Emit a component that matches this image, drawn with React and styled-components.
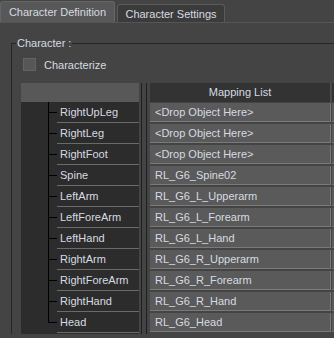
import React from "react";
import styled, { createGlobalStyle } from "styled-components";

const Global = createGlobalStyle`
  html, body { margin: 0; padding: 0; background: #444444; overflow: hidden; }
  body {
    font-family: "Liberation Sans", Arial, sans-serif;
    font-size: 11px;
    color: #d6dbe2;
  }
  #root { width: 334px; height: 338px; overflow: hidden; }
`;

const Page = styled.div`
  width: 334px;
  height: 338px;
  overflow: hidden;
  background: #444444;
`;

const TabBar = styled.div`
  display: flex;
  align-items: flex-end;
  height: 22px;
  border-bottom: 1px solid #555555;
`;

const Tab = styled.div`
  box-sizing: border-box;
  display: flex;
  align-items: center;
  justify-content: center;
  width: ${(p) => (p.$active ? 115 : 108)}px;
  height: ${(p) => (p.$active ? 21 : 18)}px;
  margin-left: ${(p) => (p.$active ? 0 : 2)}px;
  background: ${(p) => (p.$active ? "#585858" : "#3b3b3b")};
  border: 1px solid ${(p) => (p.$active ? "#666666" : "#5a5a5a")};
  border-bottom: none;
  border-radius: 3px 3px 0 0;
  white-space: nowrap;
`;

const Panel = styled.div`
  padding-left: 11px;
`;

const Group = styled.fieldset`
  margin: 14px 0 0 0;
  padding: 0;
  width: 460px;
  min-width: 0;
  border: 1px solid #262626;
  border-right: none;
  border-bottom: none;
`;

const Legend = styled.legend`
  margin-left: 4px;
  padding: 0 1px;
  line-height: 12px;
`;

const GroupBody = styled.div`
  padding-left: 9px;
`;

const CheckRow = styled.label`
  display: flex;
  align-items: center;
  gap: 8px;
  height: 13px;
  margin: 9px 0 0 2px;
`;

const CheckBox = styled.span`
  box-sizing: border-box;
  width: 13px;
  height: 13px;
  background: #575757;
  border: 1px solid #636363;
`;

const Table = styled.div`
  display: flex;
  margin-top: 12px;
`;

const LeftCol = styled.div`
  flex: none;
  width: 118px;
  background: #2c2c2c;
`;

const LeftHeader = styled.div`
  height: 19px;
  background: #585858;
`;

const Row = styled.div`
  display: flex;
  height: 21px;
`;

const TreeCell = styled.div`
  position: relative;
  flex: none;
  width: 36px;
  &::before {
    content: "";
    position: absolute;
    left: 27px;
    top: 0;
    width: 1px;
    height: ${(p) => (p.$last ? "50%" : "100%")};
    background: #000;
  }
  &::after {
    content: "";
    position: absolute;
    left: 27px;
    top: 10px;
    width: 9px;
    height: 1px;
    background: #000;
  }
`;

const Bone = styled.div`
  flex: 1;
  box-sizing: border-box;
  padding-left: 3px;
  line-height: 20px;
  border-bottom: 1px solid #6a6a6a;
  white-space: nowrap;
`;

const Splitter = styled.div`
  flex: none;
  display: flex;
  gap: 4px;
  width: 11px;
  box-sizing: border-box;
  padding-left: 2px;
`;

const SplitLine = styled.div`
  width: 1px;
  background: #1f1f1f;
`;

const RightTable = styled.div`
  flex: none;
  display: flex;
  gap: 1px;
`;

const Column = styled.div`
  width: ${(p) => p.$w}px;
  flex: none;
`;

const ColHeader = styled.div`
  box-sizing: border-box;
  height: 19px;
  margin-bottom: 1px;
  background: #333333;
  border-right: 1px solid #505050;
  text-align: center;
  line-height: 19px;
`;

const Cell = styled.div`
  box-sizing: border-box;
  height: 19px;
  margin-bottom: 2px;
  padding-left: 5px;
  background: #5a5a5a;
  border-right: 1px solid #7a7a7a;
  border-bottom: 1px solid #7a7a7a;
  line-height: 18px;
  white-space: nowrap;
  overflow: hidden;
`;

const rows = [
  ["RightUpLeg", "<Drop Object Here>"],
  ["RightLeg", "<Drop Object Here>"],
  ["RightFoot", "<Drop Object Here>"],
  ["Spine", "RL_G6_Spine02"],
  ["LeftArm", "RL_G6_L_Upperarm"],
  ["LeftForeArm", "RL_G6_L_Forearm"],
  ["LeftHand", "RL_G6_L_Hand"],
  ["RightArm", "RL_G6_R_Upperarm"],
  ["RightForeArm", "RL_G6_R_Forearm"],
  ["RightHand", "RL_G6_R_Hand"],
  ["Head", "RL_G6_Head"],
];

export default function App() {
  return (
    <Page>
      <Global />
      <TabBar>
        <Tab $active>Character Definition</Tab>
        <Tab>Character Settings</Tab>
      </TabBar>
      <Panel>
        <Group>
          <Legend>Character :</Legend>
          <GroupBody>
            <CheckRow>
              <CheckBox />
              <span>Characterize</span>
            </CheckRow>
            <Table>
              <LeftCol>
                <LeftHeader />
                {rows.map(([bone], i) => (
                  <Row key={bone}>
                    <TreeCell $last={i === rows.length - 1} />
                    <Bone>{bone}</Bone>
                  </Row>
                ))}
              </LeftCol>
              <Splitter>
                <SplitLine />
                <SplitLine />
              </Splitter>
              <RightTable>
                <Column $w={181}>
                  <ColHeader>Mapping List</ColHeader>
                  {rows.map(([bone, obj]) => (
                    <Cell key={bone}>{obj}</Cell>
                  ))}
                </Column>
                <Column $w={100}>
                  <ColHeader />
                  {rows.map(([bone]) => (
                    <Cell key={bone} />
                  ))}
                </Column>
              </RightTable>
            </Table>
          </GroupBody>
        </Group>
      </Panel>
    </Page>
  );
}
